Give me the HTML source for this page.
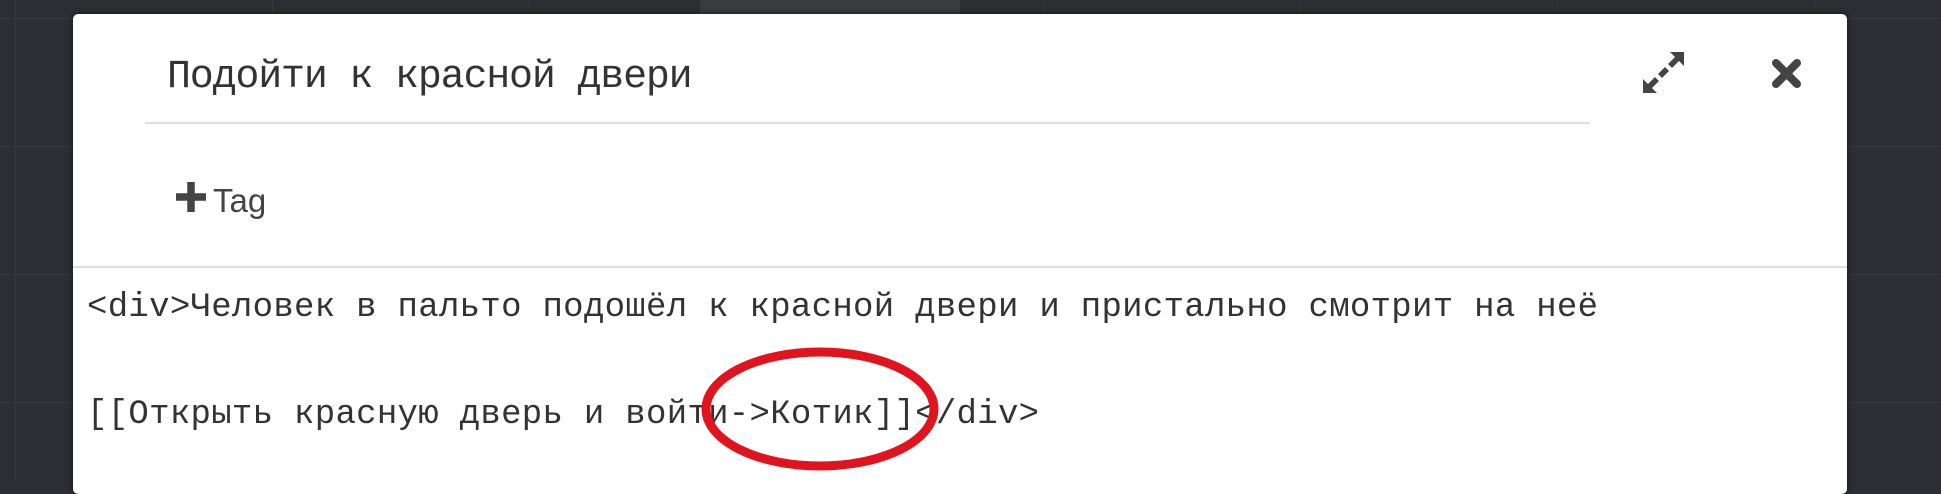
<!DOCTYPE html>
<html><head><meta charset="utf-8"><style>
body{margin:0;width:1941px;height:480px;overflow:hidden;background:#2d2e33;position:relative;font-family:"Liberation Sans",sans-serif}
.grid{position:absolute;inset:0;background-image:linear-gradient(#36373c 1px,transparent 1px),linear-gradient(90deg,#36373c 1px,transparent 1px);background-size:257px 128px;background-position:15px 18px}
.modal{position:absolute;left:73px;top:14px;width:1774px;height:480px;background:#fff;border-radius:5px;box-shadow:0 0 6px rgba(0,0,0,.6)}
.t{position:absolute;font-family:"Liberation Mono",monospace;color:#333;white-space:pre}
</style></head><body>
<div class="grid"></div>
<div style="position:absolute;left:700px;top:0;width:260px;height:14px;background:#3a3b40"></div>
<div class="modal">
<div class="t" style="left:94px;top:41px;font-size:40px;line-height:46px;letter-spacing:-1.2px">Подойти к красной двери</div>
<div style="position:absolute;left:72px;top:108px;width:1445px;height:2px;background:#ddd"></div>
<svg style="position:absolute;left:103px;top:168px" width="30" height="30" viewBox="0 0 28 28"><path d="M10.5 0h7v10.5H28v7H17.5V28h-7V17.5H0v-7h10.5z" fill="#444"/></svg>
<div style="position:absolute;left:140px;top:167px;font-size:33px;line-height:40px;color:#444">Tag</div>
<svg style="position:absolute;left:1570px;top:38px" width="41" height="41" viewBox="0 0 41 41"><g fill="#444"><path d="M27 0h14v14l-5-5-7 7-4-4 7-7z"/><path d="M0 41V27l5 5 7-7 4 4-7 7 5 5z"/><path d="M15 22l7-7 4 4-7 7z"/></g></svg>
<svg style="position:absolute;left:1698px;top:44px" width="31" height="31" viewBox="0 0 31 31"><path d="M5 5L26 26M26 5L5 26" stroke="#444" stroke-width="8" stroke-linecap="round"/></svg>
<div style="position:absolute;left:0;top:252px;width:1774px;height:2px;background:#ddd"></div>
<div class="t" style="left:14px;top:274px;font-size:34px;line-height:40px;letter-spacing:0.3px">&lt;div&gt;Человек в пальто подошёл к красной двери и пристально смотрит на неё</div>
<div class="t" style="left:14px;top:381px;font-size:34px;line-height:40px;letter-spacing:0.3px">[[Открыть красную дверь и войти-&gt;Котик]]&lt;/div&gt;</div>
</div>
<svg style="position:absolute;left:0;top:0" width="1941" height="480"><ellipse cx="820" cy="409" rx="114" ry="57" fill="none" stroke="#e0141e" stroke-width="9"/></svg>
</body></html>
